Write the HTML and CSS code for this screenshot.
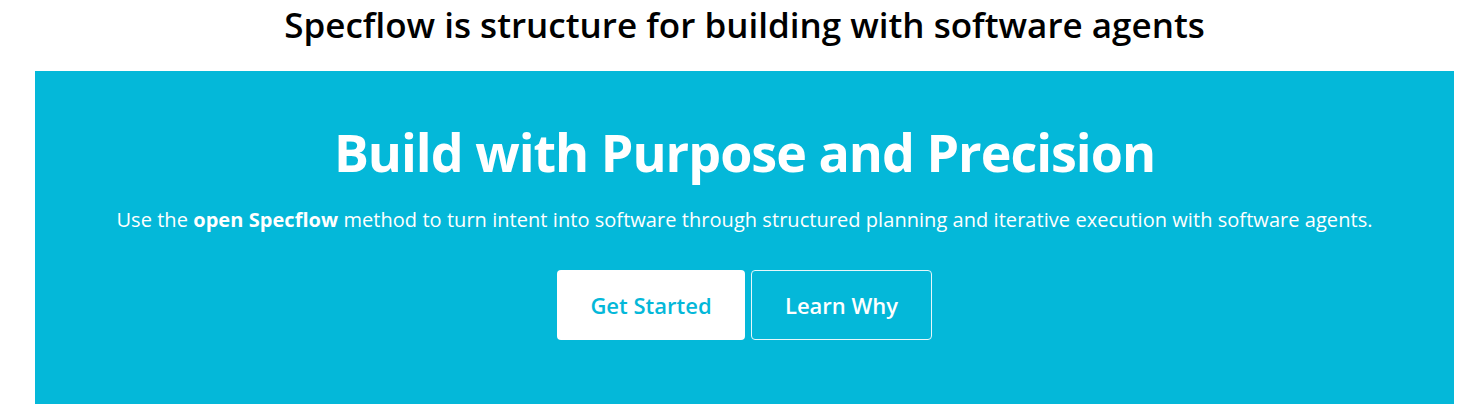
FILE: index.html
```html
<!DOCTYPE html>
<html lang="en">
<head>
<meta charset="utf-8">
<title>Specflow</title>
<link rel="stylesheet" href="styles.css">
</head>
<body>
<div class="page">
  <h1 class="title">Specflow is structure for building with software agents</h1>
  <section class="hero">
    <h2 class="hero-title">Build with Purpose and Precision</h2>
    <p class="hero-text">Use the <strong>open Specflow</strong> method to turn intent into software through structured planning and iterative execution with software agents.</p>
    <div class="actions">
      <a class="btn btn-primary" href="#">Get Started</a>
      <a class="btn btn-outline" href="#">Learn Why</a>
    </div>
  </section>
</div>
</body>
</html>
```
FILE: styles.css
```css
html, body {
  margin: 0;
  padding: 0;
  background: #ffffff;
}
body {
  font-family: "Open Sans", "Noto Sans", sans-serif;
  color: #000;
}
.page {
  width: 1419px;
  margin-left: 35px;
}
.title {
  margin: 0;
  padding-top: 3px;
  height: 71px;
  box-sizing: border-box;
  text-align: center;
  font-size: 35px;
  font-weight: 600;
  line-height: 44px;
}
.hero {
  background: #04b8d9;
  color: #fff;
  height: 333px;
  box-sizing: border-box;
  padding-top: 45px;
  display: flex;
  flex-direction: column;
  align-items: center;
}
.hero-title {
  margin: 0;
  font-size: 52px;
  font-weight: 700;
  line-height: 72px;
  letter-spacing: -1px;
}
.hero-text {
  margin: 18px 0 0;
  font-size: 20px;
  line-height: 28px;
  letter-spacing: 0.05px;
}
.hero-text strong {
  font-weight: 700;
}
.actions {
  margin-top: 36px;
  display: flex;
  gap: 6px;
}
.btn {
  display: flex;
  align-items: center;
  justify-content: center;
  height: 70px;
  box-sizing: border-box;
  border-radius: 4px;
  font-size: 22px;
  font-weight: 600;
  text-decoration: none;
}
.btn-primary {
  width: 188px;
  background: #fff;
  color: #04b8d9;
}
.btn-outline {
  width: 181px;
  border: 1px solid #e6f8fb;
  color: #fff;
}
```
